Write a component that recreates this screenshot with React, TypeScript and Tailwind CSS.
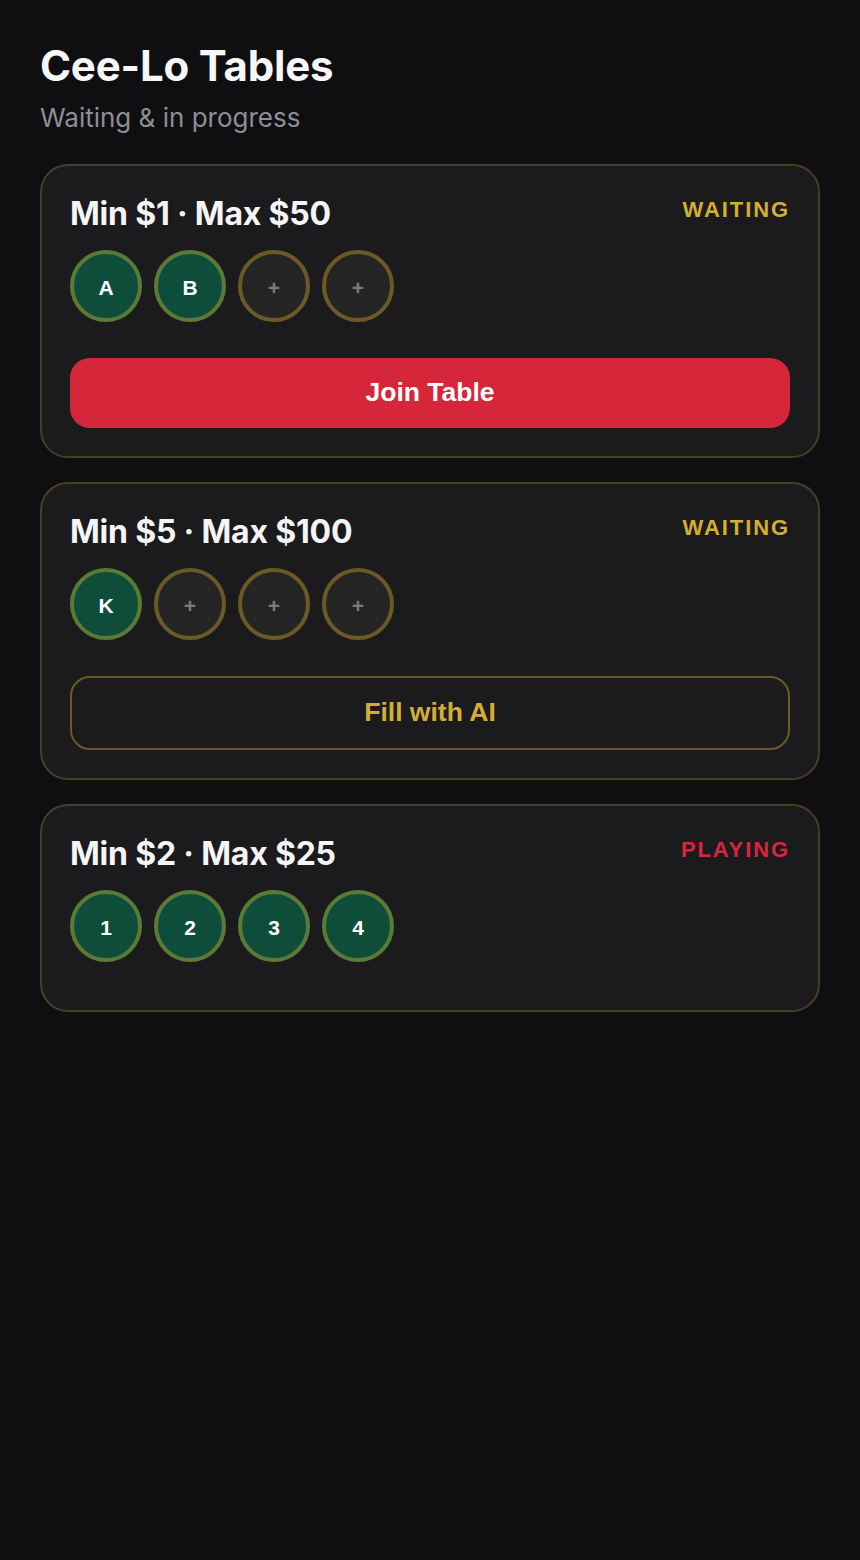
import React from 'react';

type Seat = { label: string | null };

interface Table {
  id: number;
  min: number;
  max: number;
  status: 'WAITING' | 'PLAYING';
  seats: Seat[];
  action: 'join' | 'fill' | null;
}

const tables: Table[] = [
  { id: 1, min: 1, max: 50, status: 'WAITING', seats: [{ label: 'A' }, { label: 'B' }, { label: null }, { label: null }], action: 'join' },
  { id: 2, min: 5, max: 100, status: 'WAITING', seats: [{ label: 'K' }, { label: null }, { label: null }, { label: null }], action: 'fill' },
  { id: 3, min: 2, max: 25, status: 'PLAYING', seats: [{ label: '1' }, { label: '2' }, { label: '3' }, { label: '4' }], action: null },
];

const SeatChip: React.FC<{ seat: Seat }> = ({ seat }) => {
  if (seat.label) {
    return (
      <div className="w-[72px] h-[72px] pt-[3px] rounded-full border-4 border-[#5b7a35] bg-[#0e4d3a] flex items-center justify-center text-white font-bold text-[21px] font-['Liberation_Sans',Arial,sans-serif]">
        {seat.label}
      </div>
    );
  }
  return (
    <div className="w-[72px] h-[72px] pt-[3px] rounded-full border-4 border-[#6b5a25] bg-[#242424] flex items-center justify-center text-[#7c7c7c] font-bold text-[21px] font-['Liberation_Sans',Arial,sans-serif]">
      +
    </div>
  );
};

const TableCard: React.FC<{ table: Table }> = ({ table }) => {
  return (
    <div className="rounded-[28px] border-2 border-[#4a3f22] bg-[#1b1b1d] px-[28px] pt-[28px] pb-[28px]">
      <div className="flex items-start justify-between">
        <h2 className="pt-[2px] text-[32px] leading-[36px] font-bold text-[#f5f5f7] tracking-[-0.2px]">
          Min ${table.min} · Max ${table.max}
        </h2>
        <span
          className={`mt-[2px] text-[22px] leading-[28px] font-bold tracking-[1.9px] font-['Liberation_Sans',Arial,sans-serif] ${
            table.status === 'PLAYING' ? 'text-[#d7263d]' : 'text-[#d4ad35]'
          }`}
        >
          {table.status}
        </span>
      </div>

      <div className="mt-[18px] mb-[18px] flex gap-[12px]">
        {table.seats.map((s, i) => (
          <SeatChip key={i} seat={s} />
        ))}
      </div>

      {table.action === 'join' && (
        <button className="mt-[18px] w-full h-[70px] rounded-[20px] bg-[#d6273a] text-white text-[26.5px] font-bold font-['Liberation_Sans',Arial,sans-serif]">
          Join Table
        </button>
      )}
      {table.action === 'fill' && (
        <button className="mt-[18px] w-full h-[74px] rounded-[20px] border-2 border-[#6b5a25] bg-transparent text-[#d4ad35] text-[26.5px] font-bold font-['Liberation_Sans',Arial,sans-serif]">
          Fill with AI
        </button>
      )}
      {table.action === null && <div className="h-[2px]" />}
    </div>
  );
};

export default function App() {
  return (
    <div className="min-h-[1560px] bg-[#0f0f11] font-['Inter',sans-serif] px-[40px] pt-[40px]">
      <h1 className="text-[42px] leading-[52px] font-bold text-[#f7f7f9] tracking-[-0.2px]">Cee-Lo Tables</h1>
      <p className="mt-[10px] text-[26px] leading-[32px] text-[#8e8e93]">Waiting &amp; in progress</p>

      <div className="mt-[30px] flex flex-col gap-[24px]">
        {tables.map((t) => (
          <TableCard key={t.id} table={t} />
        ))}
      </div>
    </div>
  );
}
